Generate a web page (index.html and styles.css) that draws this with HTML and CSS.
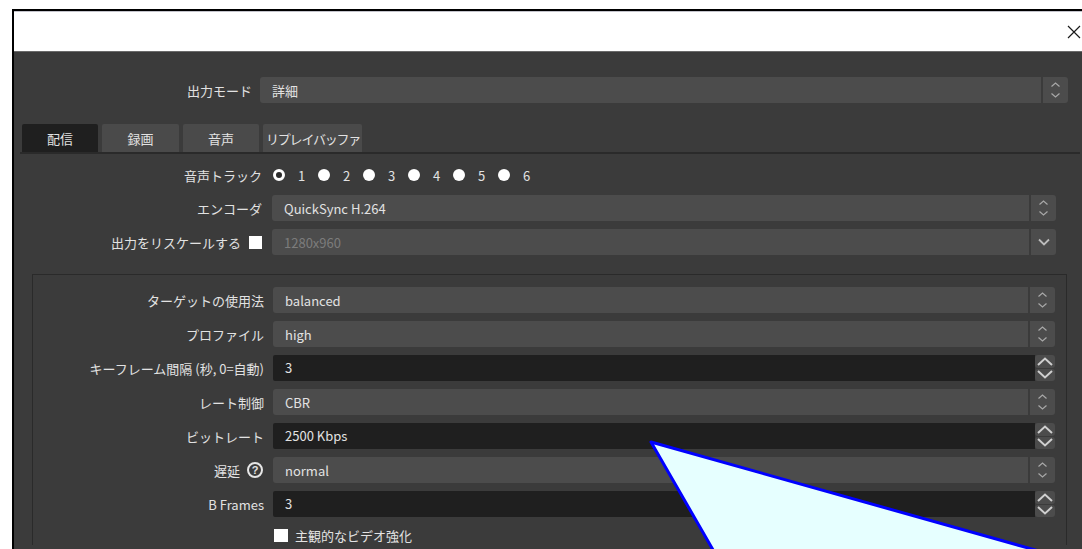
FILE: index.html
```html
<!DOCTYPE html>
<html lang="ja">
<head>
<meta charset="utf-8">
<title>出力設定</title>
<link rel="stylesheet" href="styles.css">
</head>
<body>
<div class="window">
  <div class="titlebar">
    <svg class="close" width="14" height="14" viewBox="0 0 14 14"><path d="M1 1 L13 13 M13 1 L1 13" stroke="#1a1a1a" stroke-width="1.2" fill="none"/></svg>
  </div>
  <div class="content">
    <div class="mode-row">
      <span class="label">出力モード</span>
      <div class="combo"><span class="value">詳細</span><span class="stepper"><svg width="9" height="16" viewBox="0 0 9 16"><path d="M0.5 4.5 L4.5 1 L8.5 4.5 M0.5 11.5 L4.5 15 L8.5 11.5" stroke="#a8a8a8" stroke-width="1.2" fill="none"/></svg></span></div>
    </div>

    <div class="tabs">
      <div class="tab active">配信</div>
      <div class="tab">録画</div>
      <div class="tab">音声</div>
      <div class="tab wide">リプレイバッファ</div>
    </div>

    <div class="pane">
      <div class="form top-form">
        <span class="label">音声トラック</span>
        <div class="radios">
          <span class="radio-item"><span class="radio checked"></span>1</span>
          <span class="radio-item"><span class="radio"></span>2</span>
          <span class="radio-item"><span class="radio"></span>3</span>
          <span class="radio-item"><span class="radio"></span>4</span>
          <span class="radio-item"><span class="radio"></span>5</span>
          <span class="radio-item"><span class="radio"></span>6</span>
        </div>

        <span class="label">エンコーダ</span>
        <div class="combo"><span class="value">QuickSync H.264</span><span class="stepper"><svg width="9" height="16" viewBox="0 0 9 16"><path d="M0.5 4.5 L4.5 1 L8.5 4.5 M0.5 11.5 L4.5 15 L8.5 11.5" stroke="#a8a8a8" stroke-width="1.2" fill="none"/></svg></span></div>

        <span class="label">出力をリスケールする<span class="check"></span></span>
        <div class="combo disabled"><span class="value">1280x960</span><span class="stepper"><svg width="12" height="8" viewBox="0 0 12 8"><path d="M1 1.5 L6 6.5 L11 1.5" stroke="#bcbcbc" stroke-width="1.8" fill="none"/></svg></span></div>
      </div>

      <div class="group">
        <div class="form group-form">
          <span class="label">ターゲットの使用法</span>
          <div class="combo"><span class="value">balanced</span><span class="stepper"><svg width="9" height="16" viewBox="0 0 9 16"><path d="M0.5 4.5 L4.5 1 L8.5 4.5 M0.5 11.5 L4.5 15 L8.5 11.5" stroke="#a8a8a8" stroke-width="1.2" fill="none"/></svg></span></div>

          <span class="label">プロファイル</span>
          <div class="combo"><span class="value">high</span><span class="stepper"><svg width="9" height="16" viewBox="0 0 9 16"><path d="M0.5 4.5 L4.5 1 L8.5 4.5 M0.5 11.5 L4.5 15 L8.5 11.5" stroke="#a8a8a8" stroke-width="1.2" fill="none"/></svg></span></div>

          <span class="label">キーフレーム間隔 (秒, 0=自動)</span>
          <div class="spin"><span class="value">3</span><span class="spin-buttons"><span class="spin-btn"><svg width="16" height="9" viewBox="0 0 16 9"><path d="M1 8 L8 1.5 L15 8" stroke="#cfcfcf" stroke-width="2" fill="none"/></svg></span><span class="spin-btn"><svg width="16" height="9" viewBox="0 0 16 9"><path d="M1 1 L8 7.5 L15 1" stroke="#cfcfcf" stroke-width="2" fill="none"/></svg></span></span></div>

          <span class="label">レート制御</span>
          <div class="combo"><span class="value">CBR</span><span class="stepper"><svg width="9" height="16" viewBox="0 0 9 16"><path d="M0.5 4.5 L4.5 1 L8.5 4.5 M0.5 11.5 L4.5 15 L8.5 11.5" stroke="#a8a8a8" stroke-width="1.2" fill="none"/></svg></span></div>

          <span class="label">ビットレート</span>
          <div class="spin"><span class="value">2500 Kbps</span><span class="spin-buttons"><span class="spin-btn"><svg width="16" height="9" viewBox="0 0 16 9"><path d="M1 8 L8 1.5 L15 8" stroke="#cfcfcf" stroke-width="2" fill="none"/></svg></span><span class="spin-btn"><svg width="16" height="9" viewBox="0 0 16 9"><path d="M1 1 L8 7.5 L15 1" stroke="#cfcfcf" stroke-width="2" fill="none"/></svg></span></span></div>

          <span class="label">遅延<span class="help">?</span></span>
          <div class="combo"><span class="value">normal</span><span class="stepper"><svg width="9" height="16" viewBox="0 0 9 16"><path d="M0.5 4.5 L4.5 1 L8.5 4.5 M0.5 11.5 L4.5 15 L8.5 11.5" stroke="#a8a8a8" stroke-width="1.2" fill="none"/></svg></span></div>

          <span class="label">B Frames</span>
          <div class="spin"><span class="value">3</span><span class="spin-buttons"><span class="spin-btn"><svg width="16" height="9" viewBox="0 0 16 9"><path d="M1 8 L8 1.5 L15 8" stroke="#cfcfcf" stroke-width="2" fill="none"/></svg></span><span class="spin-btn"><svg width="16" height="9" viewBox="0 0 16 9"><path d="M1 1 L8 7.5 L15 1" stroke="#cfcfcf" stroke-width="2" fill="none"/></svg></span></span></div>

          <span class="label"></span>
          <div class="check-row"><span class="check"></span>主観的なビデオ強化</div>
        </div>
      </div>
    </div>
  </div>
</div>

<svg class="callout" width="1082" height="549" viewBox="0 0 1082 549">
  <polygon points="651,442 1078,562 720,562" fill="#e6ffff" stroke="#0000ff" stroke-width="3" stroke-linejoin="round"/>
</svg>
</body>
</html>
```

FILE: styles.css
```css
html, body {
  margin: 0;
  padding: 0;
  background: #ffffff;
  width: 1082px;
  height: 549px;
  overflow: hidden;
  font-family: "Noto Sans CJK JP", "Noto Sans", sans-serif;
  font-size: 13px;
}

.window {
  display: flex;
  flex-direction: column;
  margin: 9px 0 0 12px;
  border-top: 2px solid #000;
  border-left: 2px solid #000;
  height: 538px;
  overflow: hidden;
}

.titlebar {
  flex: none;
  height: 39px;
  border-top: 1px solid #c4c4cc;
  background: #ffffff;
  display: flex;
  align-items: center;
  justify-content: flex-end;
  padding-right: 1px;
  border-bottom: 1px solid #6a6a6a;
}

.close {
  display: block;
  margin-top: 1px;
}

.content {
  flex: 1;
  min-height: 0;
  overflow: hidden;
  background: #3b3b3b;
  color: #e2e2e2;
  padding: 25px 2px 0 6px;
}

.label {
  display: flex;
  align-items: center;
  justify-content: flex-end;
  white-space: nowrap;
  line-height: 1;
}

/* output mode selector above the tabs */
.mode-row {
  display: grid;
  grid-template-columns: 232px 1fr;
  column-gap: 8px;
  height: 26px;
  margin-right: 12px;
}

.combo {
  display: flex;
  align-items: center;
  height: 26px;
  background: #4c4c4c;
  border-radius: 3px;
}

.combo .value {
  flex: 1;
  padding-left: 12px;
  white-space: nowrap;
}

.combo.disabled .value {
  color: #7c7c7c;
}

.stepper {
  width: 25px;
  height: 26px;
  border-left: 2px solid #3b3b3b;
  display: flex;
  align-items: center;
  justify-content: center;
}

.stepper svg {
  display: block;
}

/* tab bar */
.tabs {
  display: flex;
  gap: 4px;
  margin: 21px 0 0 2px;
  height: 28px;
}

.tab {
  width: 76px;
  height: 28px;
  background: #4a4a4a;
  border-radius: 2px 2px 0 0;
  display: flex;
  align-items: center;
  justify-content: center;
  padding-top: 1px;
  box-sizing: border-box;
  white-space: nowrap;
}

.tab:nth-child(2) {
  width: 77px;
}

.tab.active {
  background: #1f1f1f;
}

.tab.wide {
  width: 99px;
  justify-content: flex-start;
  padding-left: 3px;
  letter-spacing: -1.2px;
}

/* tab page */
.pane {
  border-top: 2px solid #2a2a2a;
  padding: 9px 13px 0 12px;
}

.form {
  display: grid;
  row-gap: 8px;
  grid-auto-rows: 26px;
}

.top-form {
  grid-template-columns: 230px 1fr;
  column-gap: 10px;
  grid-template-rows: 24px 26px 26px;
  margin-right: 11px;
}

.radios {
  display: flex;
  align-items: center;
  padding-left: 1px;
}

.radio-item {
  display: inline-flex;
  align-items: center;
  width: 45px;
  line-height: 1;
}

.radio {
  width: 12px;
  height: 12px;
  border-radius: 50%;
  background: #ffffff;
  margin-right: 13px;
  box-sizing: border-box;
}

.radio.checked {
  background: #2a2a2a;
  border: 3px solid #ffffff;
}

.check {
  display: inline-block;
  width: 13px;
  height: 13px;
  background: #ffffff;
  margin-left: 8px;
}

.group {
  margin-top: 19px;
  border: 1px solid #2a2a2a;
  border-bottom: none;
  padding: 12px 11px 0 0;
}

.group-form {
  grid-template-columns: 231px 1fr;
  column-gap: 9px;
  grid-template-rows: repeat(7, 26px) 20px;
}

.spin {
  display: flex;
  align-items: center;
  height: 26px;
}

.spin .value {
  flex: 1;
  height: 26px;
  line-height: 26px;
  background: #1f1f1f;
  padding-left: 12px;
  border-radius: 2px 0 0 2px;
}

.spin-buttons {
  width: 20px;
  height: 26px;
  display: flex;
  flex-direction: column;
  gap: 1px;
}

.spin-btn {
  flex: 1;
  background: #4c4c4c;
  display: flex;
  align-items: center;
  justify-content: center;
  border-radius: 3px;
}

.spin-btn svg {
  display: block;
}

.help {
  display: inline-flex;
  align-items: center;
  justify-content: center;
  width: 16px;
  height: 16px;
  box-sizing: border-box;
  border: 2px solid #e6e6e6;
  border-radius: 50%;
  font-size: 11px;
  font-weight: bold;
  margin-left: 7px;
  margin-right: 1px;
  font-family: "Liberation Sans", sans-serif;
}

.check-row {
  display: flex;
  align-items: center;
  padding-left: 1px;
}

.check-row .check {
  margin: 0 7px 0 0;
  width: 14px;
  height: 13px;
}

.callout {
  position: absolute;
  left: 0;
  top: 0;
  pointer-events: none;
}
```
